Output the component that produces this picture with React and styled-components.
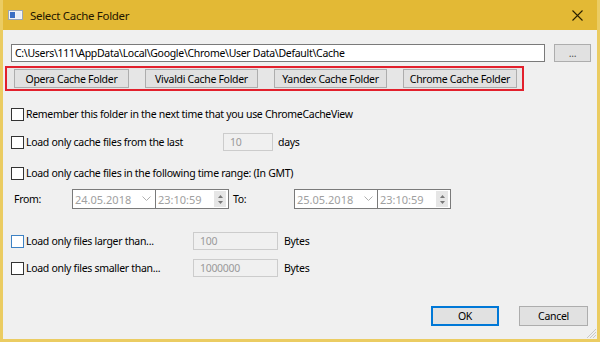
import React from 'react';
import styled, { createGlobalStyle } from 'styled-components';

const GlobalStyle = createGlobalStyle`
  html, body {
    margin: 0;
    padding: 0;
    background: #f0f0f0;
  }
  * {
    box-sizing: border-box;
  }
`;

const Window = styled.div`
  width: 600px;
  height: 342px;
  display: flex;
  flex-direction: column;
  border: 3px solid #ebcc62;
  border-top: none;
  font-family: "Noto Sans", "Open Sans", sans-serif;
  font-size: 10.5px;
  letter-spacing: -0.3px;
  color: #000;
  overflow: hidden;
`;

const TitleBar = styled.div`
  height: 30px;
  margin: 0 -3px;
  background: #e3b935;
  display: flex;
  align-items: center;
  padding: 0 0 0 8px;
  flex-shrink: 0;
`;

const Title = styled.span`
  margin-left: 7px;
  font-size: 11.5px;
  color: #1f1600;
`;

const CloseButton = styled.div`
  margin-left: auto;
  width: 46px;
  height: 30px;
  display: flex;
  align-items: center;
  justify-content: center;
`;

const Body = styled.div`
  flex: 1;
  position: relative;
  background: #f0f0f0;
  padding: 14px 9px 0 8px;
  display: flex;
  flex-direction: column;
`;

const PathRow = styled.div`
  display: flex;
  gap: 9px;
  height: 18px;
`;

const TextField = styled.div`
  width: ${(p) => p.$w}px;
  height: ${(p) => p.$h || 18}px;
  background: ${(p) => (p.$disabled ? '#f0f0f0' : '#fff')};
  border: 1px solid ${(p) => (p.$disabled ? '#cccccc' : '#7a7a7a')};
  color: ${(p) => (p.$disabled ? '#9a9a9a' : '#000')};
  display: flex;
  align-items: center;
  padding-left: ${(p) => (p.$disabled ? 6 : 3)}px;
  white-space: nowrap;
  overflow: hidden;
  flex-shrink: 0;
`;

const Button = styled.div`
  width: ${(p) => p.$w}px;
  height: ${(p) => p.$h || 19}px;
  background: #e1e1e1;
  border: 1px solid ${(p) => (p.$default ? '#0078d7' : '#adadad')};
  box-shadow: ${(p) => (p.$default ? 'inset 0 0 0 1px #0078d7' : 'none')};
  display: flex;
  align-items: center;
  justify-content: center;
  flex-shrink: 0;
  color: ${(p) => (p.$muted ? '#555' : '#000')};
`;

const RedBox = styled.div`
  margin: 4px 0 0 -6px;
  width: 519px;
  height: 25px;
  border: 2px solid #e2202c;
  background: #e6e6e6;
  display: flex;
  align-items: center;
  padding-left: 7px;
  gap: 16px;
`;

const Row = styled.div`
  display: flex;
  align-items: center;
  height: 20px;
  margin-top: ${(p) => p.$mt}px;
`;

const Check = styled.span`
  width: 13px;
  height: 13px;
  border: 1px solid ${(p) => (p.$focus ? '#3d82c4' : '#333')};
  background: #fff;
  flex-shrink: 0;
  margin-right: 2px;
`;

const LabelCol = styled.div`
  width: ${(p) => p.$w}px;
  display: flex;
  align-items: center;
  flex-shrink: 0;
  padding-left: ${(p) => p.$pl || 0}px;
  white-space: nowrap;
`;

const Unit = styled.span`
  margin-left: ${(p) => p.$ml}px;
`;

const DateBox = styled.div`
  width: ${(p) => p.$w}px;
  height: 20px;
  background: #fff;
  border: 1px solid #7a7a7a;
  ${(p) => (p.$joined ? 'border-left: none;' : '')}
  display: flex;
  align-items: center;
  padding-left: 2px;
  color: #a0a0a0;
  font-size: 11px;
  letter-spacing: 0;
  flex-shrink: 0;
`;

const Chevron = styled.span`
  margin-left: auto;
  margin-right: 4px;
  display: flex;
`;

const Spinner = styled.div`
  margin-left: auto;
  margin-right: 2px;
  width: 12px;
  height: 16px;
  background: #e6e6e6;
  display: flex;
  flex-direction: column;
  align-items: center;
  justify-content: center;
  gap: 3px;
`;

const Footer = styled.div`
  display: flex;
  justify-content: flex-end;
  gap: 20px;
  margin-top: 28px;
`;

const Grip = styled.svg`
  position: absolute;
  right: 0;
  bottom: 0;
`;

const AppIcon = () => (
  <svg width="15" height="10" viewBox="0 0 15 10">
    <rect x="0.5" y="0.5" width="14" height="9" fill="#f4f4f4" stroke="#9aa7b8" />
    <rect x="2" y="2" width="5" height="6" fill="#3a6fc4" />
    <rect x="8" y="2" width="5" height="6" fill="#e8eef6" />
  </svg>
);

const DownArrow = () => (
  <svg width="9" height="6" viewBox="0 0 9 6">
    <path d="M0.5 0.5 L4.5 4.5 L8.5 0.5" fill="none" stroke="#b0b0b0" strokeWidth="1" />
  </svg>
);

const SpinArrows = () => (
  <>
    <svg width="5" height="3" viewBox="0 0 5 3"><path d="M0 3 L2.5 0 L5 3 Z" fill="#777" /></svg>
    <svg width="5" height="3" viewBox="0 0 5 3"><path d="M0 0 L2.5 3 L5 0 Z" fill="#777" /></svg>
  </>
);

const TimeBox = ({ value, w }) => (
  <DateBox $w={w} $joined>
    <span>{value}</span>
    <Spinner>
      <SpinArrows />
    </Spinner>
  </DateBox>
);

const App = () => (
  <>
    <GlobalStyle />
    <Window>
      <TitleBar>
        <AppIcon />
        <Title>Select Cache Folder</Title>
        <CloseButton>
          <svg width="11" height="11" viewBox="0 0 11 11">
            <path d="M0.5 0.5 L10.5 10.5 M10.5 0.5 L0.5 10.5" stroke="#2a2000" strokeWidth="1.1" />
          </svg>
        </CloseButton>
      </TitleBar>
      <Body>
        <PathRow>
          <TextField $w={534}>C:\Users\111\AppData\Local\Google\Chrome\User Data\Default\Cache</TextField>
          <Button $w={37} $h={18} $muted>...</Button>
        </PathRow>

        <RedBox>
          <Button $w={115}>Opera Cache Folder</Button>
          <Button $w={113}>Vivaldi Cache Folder</Button>
          <Button $w={113}>Yandex Cache Folder</Button>
          <Button $w={114}>Chrome Cache Folder</Button>
        </RedBox>

        <Row $mt={13}>
          <Check />
          <span>Remember this folder in the next time that you use ChromeCacheView</span>
        </Row>

        <Row $mt={8}>
          <LabelCol $w={212}>
            <Check />
            <span>Load only cache files from the last</span>
          </LabelCol>
          <TextField $w={50} $disabled>10</TextField>
          <Unit $ml={5}>days</Unit>
        </Row>

        <Row $mt={11}>
          <Check />
          <span>Load only cache files in the following time range: (In GMT)</span>
        </Row>

        <Row $mt={6}>
          <LabelCol $w={61} $pl={3}>From:</LabelCol>
          <DateBox $w={84}>
            24.05.2018
            <Chevron><DownArrow /></Chevron>
          </DateBox>
          <TimeBox value="23:10:59" w={73} />
          <LabelCol $w={65} $pl={4}>To:</LabelCol>
          <DateBox $w={84}>
            25.05.2018
            <Chevron><DownArrow /></Chevron>
          </DateBox>
          <TimeBox value="23:10:59" w={73} />
        </Row>

        <Row $mt={22}>
          <LabelCol $w={182}>
            <Check $focus />
            <span>Load only files larger than...</span>
          </LabelCol>
          <TextField $w={85} $disabled>100</TextField>
          <Unit $ml={6}>Bytes</Unit>
        </Row>

        <Row $mt={7}>
          <LabelCol $w={182}>
            <Check />
            <span>Load only files smaller than...</span>
          </LabelCol>
          <TextField $w={85} $disabled>1000000</TextField>
          <Unit $ml={6}>Bytes</Unit>
        </Row>

        <Footer>
          <Button $w={68} $h={20} $default>OK</Button>
          <Button $w={69} $h={20}>Cancel</Button>
        </Footer>

        <Grip width="10" height="10" viewBox="0 0 10 10">
          <path d="M9 3 L3 9 M9 6 L6 9 M9 0 L0 9" stroke="#c8c8c8" strokeWidth="1" />
        </Grip>
      </Body>
    </Window>
  </>
);

export default App;
